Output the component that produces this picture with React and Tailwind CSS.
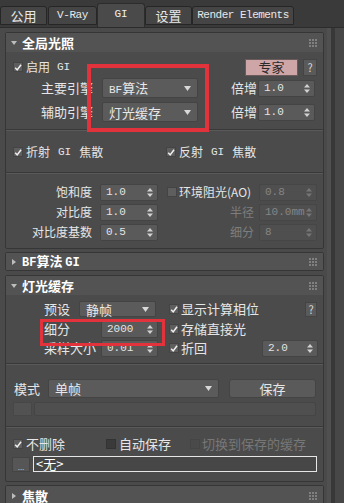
import React from 'react';

const cjk = "font-['Noto_Sans_CJK_SC','Noto_Sans',sans-serif]";
const mono = "font-['Liberation_Mono','DejaVu_Sans_Mono',monospace]";

function Check({ on, dim, dark }) {
  const box = dim
    ? 'bg-[#4a4a4a] border-[#454545]'
    : dark
    ? 'bg-[#3a3a3a] border-[#333]'
    : 'bg-[#5e5e5e] border-[#444]';
  return (
    <span className={`w-[10px] h-[10px] shrink-0 flex items-center justify-center border ${box}`}>
      {on && (
        <svg width="9" height="9" viewBox="0 0 10 10">
          <path d="M1.5 5.2 L4 8 L8.8 1.6" stroke="#f0f0f0" strokeWidth="1.9" fill="none" />
        </svg>
      )}
    </span>
  );
}

function Arrows({ dim }) {
  return (
    <svg width="6" height="9" viewBox="0 0 6 9" className="mr-[4px] shrink-0">
      <path d="M3 0 L6 3.6 L0 3.6 Z M0 5.4 L6 5.4 L3 9 Z" fill={dim ? '#777' : '#d2d2d2'} />
    </svg>
  );
}

function Spin({ value, w, dim }) {
  return (
    <div
      className={`${w} h-[17px] flex items-center rounded-[2px] border ${
        dim ? 'bg-[#4f4f4f] border-[#464646] text-[#858585]' : 'bg-[#5a5a5a] border-[#444] text-[#e4e4e4]'
      }`}
    >
      <span className={`${mono} flex-1 pl-[5px] text-[11px] leading-none`}>{value}</span>
      <Arrows dim={dim} />
    </div>
  );
}

function Drop({ children, w, h }) {
  return (
    <div className={`${w} ${h} flex items-center bg-[#5b5b5b] border border-[#444] rounded-[2px]`}>
      <span className="flex-1 pl-[6px] text-[13px] text-[#e8e8e8] leading-none">{children}</span>
      <svg width="7" height="5" viewBox="0 0 7 5" className="mr-[6px] shrink-0">
        <path d="M0 0 H7 L3.5 5 Z" fill="#d8d8d8" />
      </svg>
    </div>
  );
}

function Grip() {
  return (
    <div className="grid grid-cols-3 gap-[1px] ml-auto mr-[6px]">
      {Array.from({ length: 9 }).map((_, i) => (
        <span key={i} className="w-[2px] h-[2px] bg-[#808080]" />
      ))}
    </div>
  );
}

function Header({ open, h, children }) {
  return (
    <div className={`${h} flex items-center bg-[#535353]`}>
      <svg width="6" height="6" viewBox="0 0 6 6" className="ml-[5px] shrink-0">
        {open ? <path d="M0 1 H6 L3 5 Z" fill="#bdbdbd" /> : <path d="M1 0 L5 3 L1 6 Z" fill="#bdbdbd" />}
      </svg>
      <span className="ml-[5px] text-[13px] font-bold text-white leading-none">{children}</span>
      <Grip />
    </div>
  );
}

const Sep = () => <div className="h-0 border-t border-t-[#393939] border-b border-b-[#595959]" />;

function Tab({ w, active, children }) {
  if (active) {
    return (
      <div className={`${w} h-[24px] flex items-center justify-center bg-[#4a4a4a] border-t border-x border-[#2c2c2c] rounded-t-[3px] text-[#f0f0f0]`}>
        {children}
      </div>
    );
  }
  return (
    <div className={`${w} h-[19px] mb-[2px] flex items-center justify-center bg-[#454545] border border-[#262626] rounded-t-[3px] text-[#e8e8e8]`}>
      {children}
    </div>
  );
}

export default function App() {
  return (
    <div className={`${cjk} w-[344px] h-[503px] overflow-hidden bg-[#4a4a4a] text-[#e6e6e6] flex flex-col select-none whitespace-nowrap`}>
      {/* tabs */}
      <div className="h-[28px] shrink-0 bg-[#3a3a3a] flex items-end border-b border-[#2c2c2c]">
        <Tab w="w-[47px]"><span className="text-[13px]">公用</span></Tab>
        <div className="w-[1px]" />
        <Tab w="w-[49px]"><span className={`${mono} text-[11px] tracking-[-0.4px]`}>V-Ray</span></Tab>
        <Tab w="w-[48px]" active><span className={`${mono} text-[11px] -mt-[2px]`}>GI</span></Tab>
        <Tab w="w-[47px]"><span className="text-[13px]">设置</span></Tab>
        <Tab w="w-[102px]"><span className={`${mono} text-[11px] tracking-[-0.5px]`}>Render Elements</span></Tab>
      </div>

      <div className="flex flex-1 min-h-0">
        <div className="w-[326px] shrink-0 pl-[5px] pt-[4px] flex flex-col gap-[3px]">
          {/* 全局光照 */}
          <div className="relative w-[319px] bg-[#4b4b4b] border border-[#363636] rounded-[2px] flex flex-col text-[12px]">
            <Header open h="h-[19px]">全局光照</Header>
            <div className="flex flex-col pt-[6px] pb-[7px]">
              <div className="h-[18px] flex items-center pl-[7px]">
                <Check on />
                <span className="ml-[3px]">启用</span>
                <span className={`${mono} ml-[7px] text-[11px]`}>GI</span>
                <div className="ml-auto w-[53px] h-[17px] flex items-center justify-center bg-[#cfa6a8] border border-[#6a5a5a] text-[#2a2a2a] text-[13px]">专家</div>
                <div className="ml-[5px] mr-[6px] w-[14px] h-[17px] flex items-center justify-center bg-[#5a5a5a] border border-[#444] text-[#d8d8d8] text-[11px]">?</div>
              </div>
              <div className="h-[20px] mt-[2px] flex items-center">
                <span className="w-[87px] text-right text-[13px]">主要引擎</span>
                <div className="ml-[9px]"><Drop w="w-[96px]" h="h-[20px]"><span className={`${mono} text-[11px]`}>BF</span>算法</Drop></div>
                <span className="ml-[33px] w-[26px] text-[13px]">倍增</span>
                <div className="ml-[1px]"><Spin value="1.0" w="w-[57px]" /></div>
              </div>
              <div className="h-[20px] mt-[4px] flex items-center">
                <span className="w-[87px] text-right text-[13px]">辅助引擎</span>
                <div className="ml-[9px]"><Drop w="w-[96px]" h="h-[20px]">灯光缓存</Drop></div>
                <span className="ml-[33px] w-[26px] text-[13px]">倍增</span>
                <div className="ml-[1px]"><Spin value="1.0" w="w-[57px]" /></div>
              </div>
              <div className="mt-[7px]"><Sep /></div>
              <div className="h-[18px] mt-[12px] flex items-center pl-[7px]">
                <div className="w-[153px] flex items-center">
                  <Check on />
                  <span className="ml-[3px]">折射</span>
                  <span className={`${mono} ml-[8px] text-[11px]`}>GI</span>
                  <span className="ml-[8px]">焦散</span>
                </div>
                <Check on />
                <span className="ml-[3px]">反射</span>
                <span className={`${mono} ml-[8px] text-[11px]`}>GI</span>
                <span className="ml-[8px]">焦散</span>
              </div>
              <div className="mt-[11px]"><Sep /></div>
              <div className="h-[18px] mt-[9px] flex items-center">
                <span className="w-[86px] text-right">饱和度</span>
                <div className="ml-[8px]"><Spin value="1.0" w="w-[58px]" /></div>
                <div className="ml-[9px]"><Check /></div>
                <span className="ml-[2px]">环境阻光(AO)</span>
                <div className="ml-auto mr-[6px]"><Spin value="0.8" w="w-[58px]" dim /></div>
              </div>
              <div className="h-[18px] mt-[2px] flex items-center">
                <span className="w-[86px] text-right">对比度</span>
                <div className="ml-[8px]"><Spin value="1.0" w="w-[58px]" /></div>
                <span className="ml-auto text-[#7e7e7e]">半径</span>
                <div className="ml-[5px] mr-[6px]"><Spin value="10.0mm" w="w-[58px]" dim /></div>
              </div>
              <div className="h-[18px] mt-[2px] flex items-center">
                <span className="w-[86px] text-right">对比度基数</span>
                <div className="ml-[8px]"><Spin value="0.5" w="w-[58px]" /></div>
                <span className="ml-auto text-[#7e7e7e]">细分</span>
                <div className="ml-[5px] mr-[6px]"><Spin value="8" w="w-[58px]" dim /></div>
              </div>
            </div>
            <div className="absolute left-[81px] top-[31px] w-[122px] h-[68px] border-[4px] border-[#e2333c]" />
          </div>

          {/* BF算法 GI */}
          <div className="w-[319px] bg-[#4b4b4b] border border-[#363636] rounded-[2px]">
            <Header h="h-[17px]"><span className={`${mono} text-[12px]`}>BF</span>算法 <span className={`${mono} text-[12px]`}>GI</span></Header>
          </div>

          {/* 灯光缓存 */}
          <div className="relative mt-[1px] w-[319px] bg-[#4b4b4b] border border-[#363636] rounded-[2px] flex flex-col text-[13px]">
            <Header open h="h-[19px]">灯光缓存</Header>
            <div className="flex flex-col pt-[5px] pb-[9px]">
              <div className="h-[18px] flex items-center pl-[38px]">
                <span className="w-[35px]">预设</span>
                <Drop w="w-[77px]" h="h-[16px]">静帧</Drop>
                <div className="ml-[13px]"><Check on /></div>
                <span className="ml-[2px]">显示计算相位</span>
                <div className="ml-auto mr-[6px] w-[12px] h-[15px] flex items-center justify-center bg-[#5a5a5a] border border-[#444] text-[#d8d8d8] text-[11px]">?</div>
              </div>
              <div className="h-[18px] mt-[2px] flex items-center pl-[38px]">
                <span className="w-[57px]">细分</span>
                <Spin value="2000" w="w-[57px]" />
                <div className="ml-[11px]"><Check on /></div>
                <span className="ml-[2px]">存储直接光</span>
              </div>
              <div className="h-[18px] mt-[1px] flex items-center pl-[38px]">
                <span className="w-[57px]">采样大小</span>
                <Spin value="0.01" w="w-[57px]" />
                <div className="ml-[11px]"><Check on /></div>
                <span className="ml-[2px]">折回</span>
                <div className="ml-auto mr-[5px]"><Spin value="2.0" w="w-[56px]" /></div>
              </div>
              <div className="mt-[6px]"><Sep /></div>
              <div className="h-[19px] mt-[14px] flex items-center pl-[8px]">
                <span className="w-[34px]">模式</span>
                <Drop w="w-[171px]" h="h-[19px]">单帧</Drop>
                <div className="ml-[10px] w-[87px] h-[19px] flex items-center justify-center bg-[#5a5a5a] border border-[#444] rounded-[3px]">保存</div>
              </div>
              <div className="h-[15px] mt-[3px] flex items-center pl-[7px]">
                <div className="w-[19px] h-[14px] bg-[#525252] border border-[#474747]" />
                <div className="ml-[2px] w-[282px] h-[14px] bg-[#4f4f4f] border border-[#454545] rounded-[2px]" />
              </div>
              <div className="mt-[10px]"><Sep /></div>
              <div className="h-[16px] mt-[8px] flex items-center pl-[7px]">
                <div className="w-[93px] flex items-center">
                  <Check on />
                  <span className="ml-[3px]">不删除</span>
                </div>
                <div className="w-[84px] flex items-center">
                  <Check dark />
                  <span className="ml-[3px]">自动保存</span>
                </div>
                <Check dim />
                <span className="ml-[2px] text-[#777]">切换到保存的缓存</span>
              </div>
              <div className="h-[16px] mt-[4px] flex items-center pl-[6px]">
                <div className="w-[18px] h-[15px] bg-[#565656] border border-[#444] flex items-end justify-center text-[8px] leading-[8px] text-[#bbb]">...</div>
                <div className="ml-[3px] w-[284px] h-[16px] flex items-center border border-[#e6e6e6] bg-[#474747] pl-[2px] text-white">&lt;无&gt;</div>
              </div>
            </div>
            <div className="absolute left-[34px] top-[43px] w-[125px] h-[27px] border-[3px] border-[#e2333c]" />
          </div>

          {/* 焦散 */}
          <div className="w-[319px] bg-[#4b4b4b] border border-[#363636] rounded-[2px]">
            <Header h="h-[19px]">焦散</Header>
          </div>
        </div>

        {/* scrollbar */}
        <div className="flex-1 flex pl-[1px]">
          <div className="w-[4px] bg-[#505050]" />
          <div className="w-[4px] bg-[#383838]" />
          <div className="flex-1 bg-[#474747]" />
        </div>
      </div>
    </div>
  );
}
